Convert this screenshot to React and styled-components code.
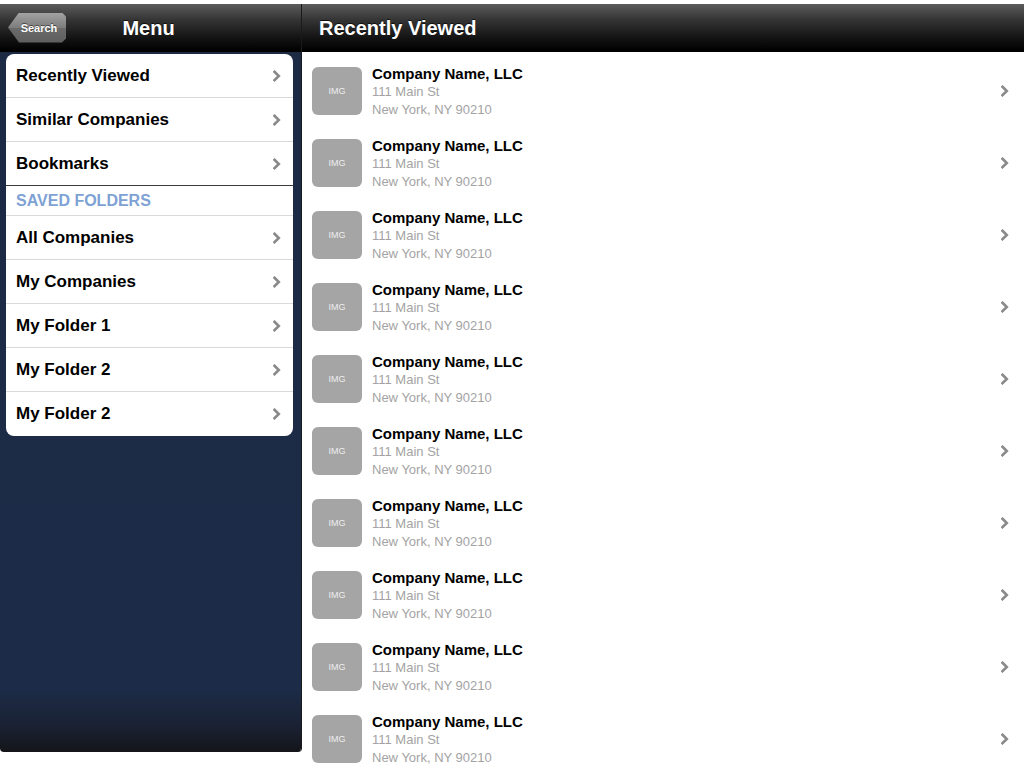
import React from 'react';
import styled, { createGlobalStyle } from 'styled-components';

const Global = createGlobalStyle`
  html, body {
    margin: 0;
    padding: 0;
    background: #fff;
    font-family: "Liberation Sans", Arial, sans-serif;
    overflow: hidden;
  }
`;

const Screen = styled.div`
  width: 1024px;
  height: 776px;
  padding-top: 4px;
  box-sizing: border-box;
  display: flex;
  background: #fff;
`;

const Side = styled.div`
  width: 301px;
  height: 748px;
  display: flex;
  flex-direction: column;
  border-right: 1px solid #1a1a1a;
  border-radius: 0 0 4px 4px;
  overflow: hidden;
`;

const Main = styled.div`
  flex: 1;
  display: flex;
  flex-direction: column;
  min-width: 0;
`;

const Bar = styled.div`
  height: 48px;
  flex-shrink: 0;
  display: flex;
  align-items: center;
  position: relative;
  background: linear-gradient(#5c5c5c 0%, #333 35%, #111 75%, #000 100%);
  border-bottom: 1px solid #000;
  box-sizing: border-box;
  padding: 0 ${p => p.$pad || 0}px;
`;

const Title = styled.div`
  color: #fff;
  font-weight: bold;
  font-size: 20px;
  margin-top: 1px;
  text-shadow: 0 -1px 0 rgba(0, 0, 0, 0.7);
  ${p => p.$center && `
    position: absolute;
    left: 0;
    right: 0;
    margin-left: -4px;
    text-align: center;
    pointer-events: none;
  `}
`;

const Back = styled.button`
  margin: 0 0 0 8px;
  height: 30px;
  width: 58px;
  border: none;
  padding: 0 0 0 4px;
  color: #fff;
  font-family: inherit;
  font-size: 11px;
  font-weight: bold;
  text-shadow: 0 -1px 0 rgba(0, 0, 0, 0.5);
  background: linear-gradient(#a2a2a2 0%, #7c7c7c 50%, #6a6a6a 51%, #5e5e5e 100%);
  clip-path: polygon(11px 0, calc(100% - 4px) 0, 100% 4px, 100% calc(100% - 4px), calc(100% - 4px) 100%, 11px 100%, 0 50%);
`;

const Nav = styled.div`
  flex: 1;
  padding: 2px 8px 0 6px;
  background: linear-gradient(#1c2a44 0%, #1c2b47 91%, #1a2234 96%, #141519 100%);
`;

const Card = styled.div`
  background: #fff;
  border-radius: 8px;
  overflow: hidden;
`;

const Row = styled.div`
  height: 44px;
  display: flex;
  align-items: center;
  justify-content: space-between;
  padding: 0 12px 0 10px;
  box-sizing: border-box;
  border-bottom: 1px solid ${p => (p.$dark ? '#3a3a3a' : '#d9d9d9')};
  font-size: 17px;
  font-weight: bold;
  color: #000;
  &:last-child {
    border-bottom: none;
  }
`;

const Section = styled.div`
  height: 30px;
  display: flex;
  align-items: center;
  padding: 0 10px;
  border-bottom: 1px solid #d9d9d9;
  font-size: 16px;
  font-weight: bold;
  color: #7ea2d4;
  box-sizing: border-box;
`;

const List = styled.div`
  flex: 1;
  padding-top: 3px;
  overflow: hidden;
`;

const Item = styled.div`
  height: 72px;
  display: flex;
  align-items: center;
  padding: 0 15px 0 10px;
`;

const Thumb = styled.div`
  width: 50px;
  height: 48px;
  border-radius: 6px;
  background: #a5a5a5;
  color: #eee;
  font-size: 9px;
  display: flex;
  align-items: center;
  justify-content: center;
  flex-shrink: 0;
`;

const Info = styled.div`
  flex: 1;
  margin-left: 10px;
  margin-top: 2px;
  line-height: 18px;
`;

const Name = styled.div`
  font-size: 15px;
  font-weight: bold;
  color: #000;
`;

const Addr = styled.div`
  font-size: 13px;
  color: #a3a3a3;
`;

const Chevron = () => (
  <svg width="8" height="12" viewBox="0 0 8 12">
    <path d="M1.5 1.8 L5.8 6 L1.5 10.2" fill="none" stroke="#8a8a8a" strokeWidth="2.6" strokeLinecap="square" />
  </svg>
);

const top = ['Recently Viewed', 'Similar Companies', 'Bookmarks'];
const folders = ['All Companies', 'My Companies', 'My Folder 1', 'My Folder 2', 'My Folder 2'];

export default function App() {
  return (
    <>
      <Global />
      <Screen>
        <Side>
          <Bar>
            <Back>Search</Back>
            <Title $center>Menu</Title>
          </Bar>
          <Nav>
            <Card>
              {top.map((t, i) => (
                <Row key={t} $dark={i === top.length - 1}>
                  {t}
                  <Chevron />
                </Row>
              ))}
              <Section>SAVED FOLDERS</Section>
              {folders.map((t, i) => (
                <Row key={i}>
                  {t}
                  <Chevron />
                </Row>
              ))}
            </Card>
          </Nav>
        </Side>
        <Main>
          <Bar $pad={17}>
            <Title>Recently Viewed</Title>
          </Bar>
          <List>
            {Array.from({ length: 10 }).map((_, i) => (
              <Item key={i}>
                <Thumb>IMG</Thumb>
                <Info>
                  <Name>Company Name, LLC</Name>
                  <Addr>111 Main St</Addr>
                  <Addr>New York, NY 90210</Addr>
                </Info>
                <Chevron />
              </Item>
            ))}
          </List>
        </Main>
      </Screen>
    </>
  );
}
